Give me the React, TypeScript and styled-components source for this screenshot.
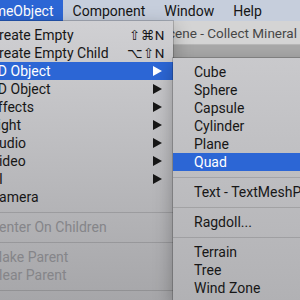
import React from 'react';
import styled, { createGlobalStyle, css } from 'styled-components';

const Global = createGlobalStyle`
  html, body { margin: 0; padding: 0; background: #9d9d9f; }
  body { font-family: Roboto, "DejaVu Sans", sans-serif; -webkit-font-smoothing: antialiased; }
`;

const Screen = styled.div`
  position: relative;
  width: 300px;
  height: 300px;
  overflow: hidden;
  display: flex;
  flex-direction: column;
  background: #9d9d9f;
`;

const MenuBar = styled.div`
  flex: none;
  display: flex;
  align-items: stretch;
  height: 21px;
  margin-left: -33px;
  background: #c6cedc;
`;

const MenuTitle = styled.div<{ $active?: boolean }>`
  display: flex;
  align-items: center;
  padding: 0 9.5px;
  font-size: 14px;
  color: #151515;
  white-space: nowrap;
  ${(p) =>
    p.$active &&
    css`
      background: #2c66d5;
      color: #fff;
    `}
`;

const TitleBar = styled.div`
  flex: none;
  height: 23px;
  display: flex;
  align-items: center;
  padding-left: 160px;
  font-size: 13.5px;
  color: #474747;
  white-space: nowrap;
  background: #d4d4d4;
`;

const ToolStrip = styled.div`
  flex: none;
  height: 14px;
  background: #a9a9a9;
  border-top: 1px solid #b8b8b8;
`;

const Workspace = styled.div`
  flex: 1;
  background: #9d9d9f;
`;

const Menu = styled.div<{ $left: number; $top: number; $width: number; $from: string; $to: string }>`
  position: absolute;
  left: ${(p) => p.$left}px;
  top: ${(p) => p.$top}px;
  width: ${(p) => p.$width}px;
  padding: 5px 0;
  display: flex;
  flex-direction: column;
  background: linear-gradient(180deg, ${(p) => p.$from}, ${(p) => p.$to});
  box-shadow: 0 0 0 1px rgba(0, 0, 0, 0.18), 0 6px 18px rgba(0, 0, 0, 0.3);
`;

const Row = styled.div<{ $active?: boolean; $disabled?: boolean; $pad: number }>`
  height: 18px;
  display: flex;
  align-items: center;
  padding: 0 8px 0 ${(p) => p.$pad}px;
  font-size: 14px;
  color: ${(p) => (p.$disabled ? '#858589' : '#171717')};
  white-space: nowrap;
  ${(p) =>
    p.$active &&
    css`
      background: #2c66d5;
      color: #fff;
    `}
`;

const Label = styled.span`
  flex: 1;
`;

const Shortcut = styled.span`
  font-size: 13.5px;
  letter-spacing: 0.5px;
`;

const Arrow = styled.svg`
  width: 9px;
  height: 10px;
  margin-right: 3px;
`;

const Separator = styled.div`
  height: 12px;
  display: flex;
  align-items: center;
  &::after {
    content: '';
    flex: 1;
    height: 1px;
    background: rgba(0, 0, 0, 0.13);
  }
`;

type Item =
  | { sep: true }
  | { sep?: false; label: string; shortcut?: string; sub?: boolean; active?: boolean; disabled?: boolean };

const mainItems: Item[] = [
  { label: 'Create Empty', shortcut: '⇧⌘N' },
  { label: 'Create Empty Child', shortcut: '⌥⇧N' },
  { label: '3D Object', sub: true, active: true },
  { label: '2D Object', sub: true },
  { label: 'Effects', sub: true },
  { label: 'Light', sub: true },
  { label: 'Audio', sub: true },
  { label: 'Video', sub: true },
  { label: 'UI', sub: true },
  { label: 'Camera' },
  { sep: true },
  { label: 'Center On Children', disabled: true },
  { sep: true },
  { label: 'Make Parent', disabled: true },
  { label: 'Clear Parent', disabled: true },
  { sep: true },
];

const subItems: Item[] = [
  { label: 'Cube' },
  { label: 'Sphere' },
  { label: 'Capsule' },
  { label: 'Cylinder' },
  { label: 'Plane' },
  { label: 'Quad', active: true },
  { sep: true },
  { label: 'Text - TextMeshPro' },
  { sep: true },
  { label: 'Ragdoll...' },
  { sep: true },
  { label: 'Terrain' },
  { label: 'Tree' },
  { label: 'Wind Zone' },
];

const ArrowIcon = () => (
  <Arrow viewBox="0 0 9 10">
    <polygon points="0,0 9,5 0,10" fill="currentColor" />
  </Arrow>
);

const MenuList = ({ items, pad }: { items: Item[]; pad: number }) => (
  <>
    {items.map((it, i) =>
      it.sep ? (
        <Separator key={i} />
      ) : (
        <Row key={i} $pad={pad} $active={it.active} $disabled={it.disabled}>
          <Label>{it.label}</Label>
          {it.shortcut && <Shortcut>{it.shortcut}</Shortcut>}
          {it.sub && <ArrowIcon />}
        </Row>
      )
    )}
  </>
);

export default function App() {
  return (
    <>
      <Global />
      <Screen>
        <MenuBar>
          <MenuTitle $active>GameObject</MenuTitle>
          <MenuTitle>Component</MenuTitle>
          <MenuTitle>Window</MenuTitle>
          <MenuTitle>Help</MenuTitle>
        </MenuBar>
        <TitleBar>Scene - Collect Mineral - Mac - Unity</TitleBar>
        <ToolStrip />
        <Workspace />
        <Menu $left={-30} $top={21} $width={203} $from="#d0d0d3" $to="#a6a6a9">
          <MenuList items={mainItems} pad={20} />
        </Menu>
        <Menu $left={173} $top={58} $width={160} $from="#c9c9cc" $to="#b1b1b4">
          <MenuList items={subItems} pad={21} />
        </Menu>
      </Screen>
    </>
  );
}
